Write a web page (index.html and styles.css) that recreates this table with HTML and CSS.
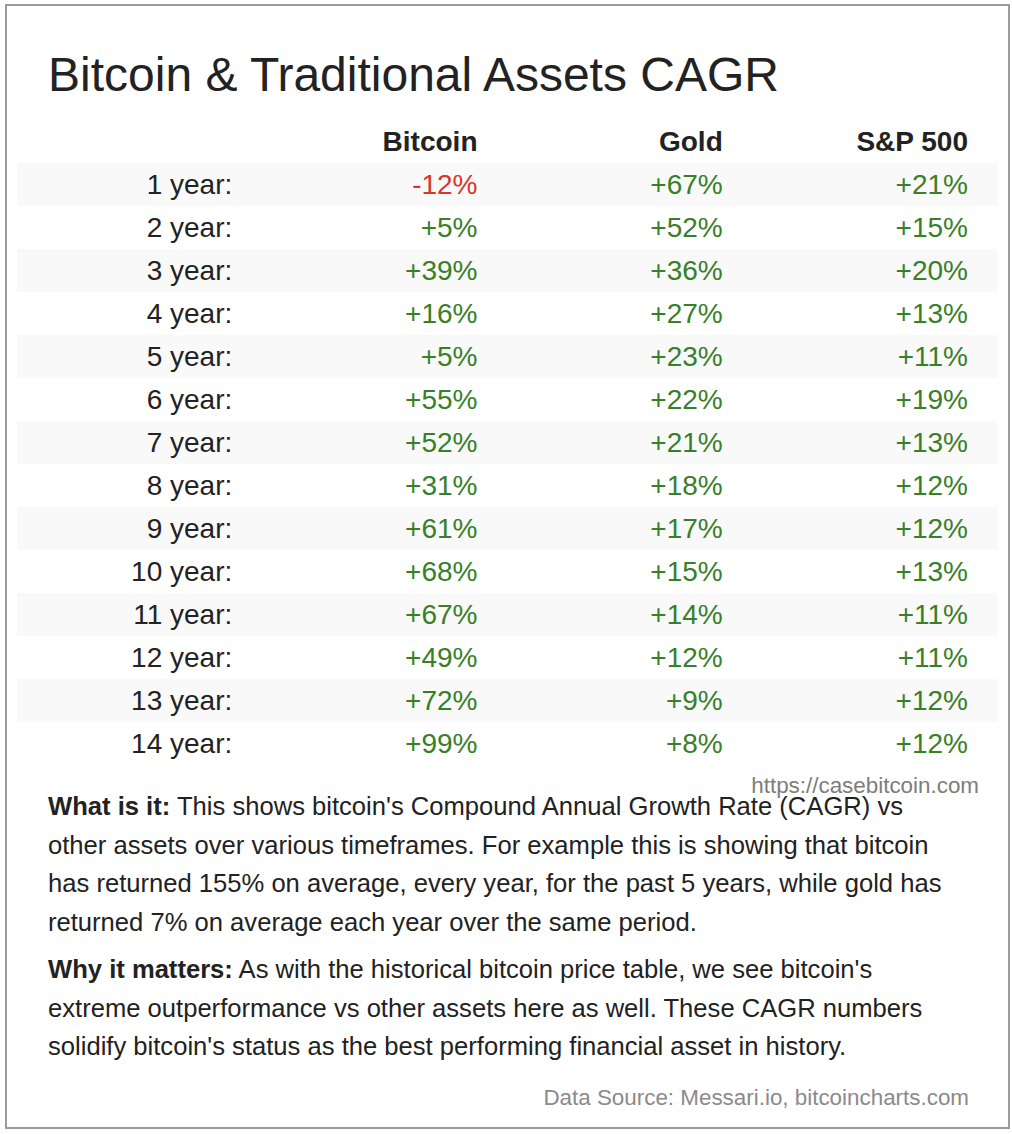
FILE: index.html
```html
<!DOCTYPE html>
<html>
<head>
<meta charset="utf-8">
<link rel="stylesheet" href="styles.css">
</head>
<body>
<div class="card">
  <h1 class="title">Bitcoin &amp; Traditional Assets CAGR</h1>
  <table class="cagr">
    <thead>
      <tr><th></th><th>Bitcoin</th><th>Gold</th><th>S&amp;P 500</th></tr>
    </thead>
    <tbody>
      <tr><td class="lbl">1 year:</td><td class="neg">-12%</td><td class="pos">+67%</td><td class="pos">+21%</td></tr>
      <tr><td class="lbl">2 year:</td><td class="pos">+5%</td><td class="pos">+52%</td><td class="pos">+15%</td></tr>
      <tr><td class="lbl">3 year:</td><td class="pos">+39%</td><td class="pos">+36%</td><td class="pos">+20%</td></tr>
      <tr><td class="lbl">4 year:</td><td class="pos">+16%</td><td class="pos">+27%</td><td class="pos">+13%</td></tr>
      <tr><td class="lbl">5 year:</td><td class="pos">+5%</td><td class="pos">+23%</td><td class="pos">+11%</td></tr>
      <tr><td class="lbl">6 year:</td><td class="pos">+55%</td><td class="pos">+22%</td><td class="pos">+19%</td></tr>
      <tr><td class="lbl">7 year:</td><td class="pos">+52%</td><td class="pos">+21%</td><td class="pos">+13%</td></tr>
      <tr><td class="lbl">8 year:</td><td class="pos">+31%</td><td class="pos">+18%</td><td class="pos">+12%</td></tr>
      <tr><td class="lbl">9 year:</td><td class="pos">+61%</td><td class="pos">+17%</td><td class="pos">+12%</td></tr>
      <tr><td class="lbl">10 year:</td><td class="pos">+68%</td><td class="pos">+15%</td><td class="pos">+13%</td></tr>
      <tr><td class="lbl">11 year:</td><td class="pos">+67%</td><td class="pos">+14%</td><td class="pos">+11%</td></tr>
      <tr><td class="lbl">12 year:</td><td class="pos">+49%</td><td class="pos">+12%</td><td class="pos">+11%</td></tr>
      <tr><td class="lbl">13 year:</td><td class="pos">+72%</td><td class="pos">+9%</td><td class="pos">+12%</td></tr>
      <tr><td class="lbl">14 year:</td><td class="pos">+99%</td><td class="pos">+8%</td><td class="pos">+12%</td></tr>
    </tbody>
  </table>
  <div class="notes">
    <div class="watermark">https://casebitcoin.com</div>
    <p><b>What is it:</b> This shows bitcoin's Compound Annual Growth Rate (CAGR) vs other assets over various timeframes. For example this is showing that bitcoin has returned 155% on average, every year, for the past 5 years, while gold has returned 7% on average each year over the same period.</p>
    <p><b>Why it matters:</b> As with the historical bitcoin price table, we see bitcoin's extreme outperformance vs other assets here as well. These CAGR numbers solidify bitcoin's status as the best performing financial asset in history.</p>
  </div>
  <div class="source">Data Source: Messari.io, bitcoincharts.com</div>
</div>
</body>
</html>
```

FILE: styles.css
```css
html, body {
  margin: 0;
  padding: 0;
  background: #ffffff;
}
body {
  padding: 4px 0 0 5px;
  font-family: "Liberation Sans", Arial, Helvetica, sans-serif;
  color: #222222;
}
.card {
  box-sizing: border-box;
  width: 1005px;
  height: 1125px;
  border: 2px solid #9b9b9b;
  padding: 0 9px 0 10px;
  position: relative;
}
.title {
  margin: 41px 0 0 31px;
  font-size: 48px;
  font-weight: normal;
  color: #222222;
  line-height: normal;
  height: 73px;
}
.cagr {
  width: 981px;
  border-collapse: collapse;
  table-layout: fixed;
  font-size: 28px;
}
.cagr th, .cagr td {
  height: 43px;
  padding: 0 30px 0 0;
  text-align: right;
  vertical-align: middle;
  line-height: normal;
}
.cagr th {
  font-weight: bold;
  color: #222222;
}
.cagr tbody tr:nth-child(odd) {
  background: #f9f9f9;
}
.cagr .lbl {
  color: #222222;
}
.cagr .pos {
  color: #378028;
}
.cagr .neg {
  color: #d7362a;
}
.notes {
  position: relative;
  margin: 22px 30px 0 31px;
  padding-right: 12px;
  font-size: 25.6px;
  line-height: 38.5px;
  color: #222222;
}
.notes p {
  margin: 0 0 9px 0;
}
.notes p:last-of-type {
  margin-bottom: 0;
}
.notes b {
  font-weight: bold;
}
.watermark {
  position: absolute;
  right: -10px;
  top: -14px;
  font-size: 22.4px;
  line-height: 26px;
  color: #7d7d7d;
}
.source {
  margin: 19px 30px 0 0;
  text-align: right;
  font-size: 22.4px;
  line-height: 26px;
  color: #8a8a8a;
}
```
